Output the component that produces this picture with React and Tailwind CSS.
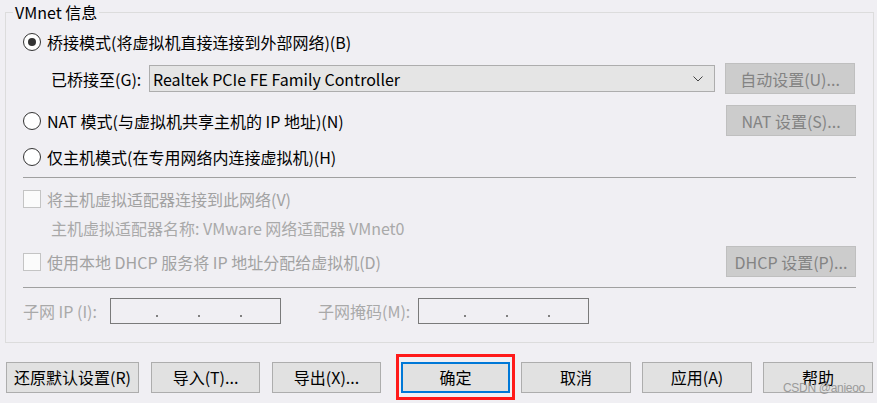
import React from 'react';

const font = { fontFamily: '"Noto Sans CJK SC", "Noto Sans", sans-serif' };

const Radio = ({ checked, label }) => (
  <div className="flex items-center h-[22px]">
    <span className="w-[18px] h-[18px] rounded-full border border-[#333333] bg-white flex items-center justify-center">
      {checked && <span className="w-[8px] h-[8px] rounded-full bg-[#333333]" />}
    </span>
    <span className="ml-[6px] text-[16px] leading-[22px] text-black">{label}</span>
  </div>
);

const Check = ({ label }) => (
  <div className="flex items-center h-[22px]">
    <span className="w-[18px] h-[18px] border border-[#c4c4c4] bg-[#fbfbfb]" />
    <span className="ml-[6px] text-[16px] leading-[22px] text-[#a2a2a2]">{label}</span>
  </div>
);

const DisabledButton = ({ children }) => (
  <div className="w-[130px] h-[31px] bg-[#cccccc] border border-[#bfbfbf] text-[#838383] text-[16px] flex items-center justify-center">
    {children}
  </div>
);

const Btn = ({ children, className = '' }) => (
  <div className={`h-[31px] bg-[#e1e1e1] border border-[#adadad] text-black text-[16px] flex items-center justify-center ${className}`}>
    {children}
  </div>
);

const IpBox = () => (
  <div className="w-[171px] h-[26px] border border-[#7a7a7a] flex items-end pb-[6px] pl-[45px] gap-[40px]">
    <span className="w-[2px] h-[2px] bg-[#808080]" />
    <span className="w-[2px] h-[2px] bg-[#808080]" />
    <span className="w-[2px] h-[2px] bg-[#808080]" />
  </div>
);

export default function App() {
  return (
    <div className="w-[877px] h-[403px] bg-[#f0eff3] overflow-hidden relative" style={font}>
      {/* VMnet 信息 分组框 */}
      <div className="relative ml-[5px] mt-[12px] w-[869px] h-[331px] border border-[#dcdcdc] px-[17px]">
        <span className="absolute left-[7px] top-[-12px] px-[2px] bg-[#f0eff3] text-[16px] leading-[22px] text-black">
          VMnet 信息
        </span>

        <div className="mt-[18px]">
          <Radio checked label="桥接模式(将虚拟机直接连接到外部网络)(B)" />
        </div>

        <div className="mt-[10px] h-[31px] flex items-center">
          <span className="ml-[28px] text-[16px] text-black w-[98px]">已桥接至(G):</span>
          <div className="w-[566px] h-[27px] bg-[#e5e5e5] border border-[#adadad] flex items-center pl-[3px] pr-[11px]">
            <span className="flex-1 text-[16px] text-black">Realtek PCIe FE Family Controller</span>
            <svg width="10" height="6" viewBox="0 0 10 6">
              <polyline points="0.5,0.5 5,5 9.5,0.5" fill="none" stroke="#444" strokeWidth="1" />
            </svg>
          </div>
          <div className="ml-[10px]">
            <DisabledButton>自动设置(U)...</DisabledButton>
          </div>
        </div>

        <div className="mt-[11px] h-[31px] flex items-center justify-between">
          <Radio label="NAT 模式(与虚拟机共享主机的 IP 地址)(N)" />
          <DisabledButton>NAT 设置(S)...</DisabledButton>
        </div>

        <div className="mt-[10px]">
          <Radio label="仅主机模式(在专用网络内连接虚拟机)(H)" />
        </div>

        <div className="mt-[9px] h-px bg-[#a0a0a0]" />

        <div className="mt-[10px]">
          <Check label="将主机虚拟适配器连接到此网络(V)" />
        </div>

        <div className="mt-[7px] h-[22px] pl-[28px] text-[16px] leading-[22px] text-[#a9a9a9]">
          主机虚拟适配器名称: VMware 网络适配器 VMnet0
        </div>

        <div className="mt-[7px] h-[31px] flex items-center justify-between">
          <Check label="使用本地 DHCP 服务将 IP 地址分配给虚拟机(D)" />
          <DisabledButton>DHCP 设置(P)...</DisabledButton>
        </div>

        <div className="mt-[10px] h-px bg-[#a0a0a0]" />

        <div className="mt-[10px] h-[26px] flex items-center text-[16px] text-[#a9a9a9]">
          <span className="w-[87px]">子网 IP (I):</span>
          <IpBox />
          <span className="ml-[37px] w-[100px]">子网掩码(M):</span>
          <IpBox />
        </div>
      </div>

      {/* 底部按钮 */}
      <div className="mt-[11px] h-[46px] flex items-center pl-[6px]">
        <Btn className="w-[133px]">还原默认设置(R)</Btn>
        <Btn className="w-[109px] ml-[12px]">导入(T)...</Btn>
        <Btn className="w-[109px] ml-[12px]">导出(X)...</Btn>
        <div className="ml-[15px] w-[119px] h-[46px] border-[3px] border-[#ff1a1a] flex items-center justify-center">
          <div className="w-[109px] h-[31px] bg-[#e1e1e1] border-2 border-[#0078d7] text-black text-[16px] flex items-center justify-center">
            确定
          </div>
        </div>
        <Btn className="w-[110px] ml-[6px]">取消</Btn>
        <Btn className="w-[110px] ml-[11px]">应用(A)</Btn>
        <Btn className="w-[110px] ml-[11px]">帮助</Btn>
      </div>

      <span className="absolute left-[783px] top-[380px] whitespace-nowrap font-['Liberation_Sans',sans-serif] text-[12px] leading-[16px] tracking-[-0.3px] text-[#8a8a8a] opacity-80">
        CSDN @anieoo
      </span>
    </div>
  );
}
